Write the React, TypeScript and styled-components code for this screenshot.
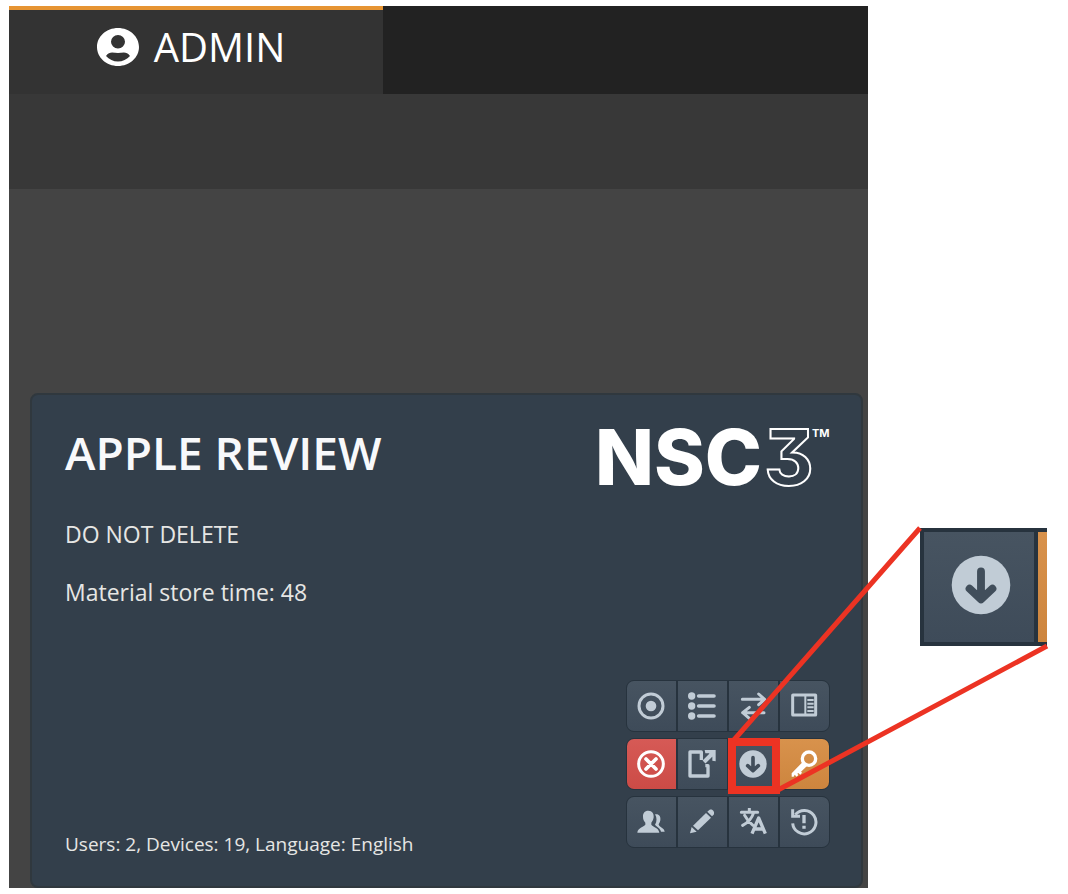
import React from "react";
import styled, { createGlobalStyle } from "styled-components";

const GlobalStyle = createGlobalStyle`
  *, *::before, *::after { box-sizing: border-box; }
  body {
    margin: 0;
    background: #ffffff;
    font-family: "Open Sans", "Noto Sans", sans-serif;
  }
`;

const light = "#c1ccd6";
const slate = "#414e5b";
const edge = "#27333e";
const marker = "#ec3323";

const Page = styled.div`
  display: flex;
  align-items: flex-start;
  padding: 6px 21px 6px 9px;
`;

const AppWindow = styled.main`
  flex: 1;
  min-width: 560px;
  background: #444444;
`;

const TopBar = styled.nav`
  display: flex;
  background: #222222;
`;

const Tab = styled.a`
  display: flex;
  align-items: center;
  justify-content: center;
  gap: 15px;
  width: 374px;
  height: 88px;
  padding-bottom: 10px;
  padding-right: 10px;
  border-top: 4px solid #e69432;
  background: #333333;
  color: #ffffff;
  font-size: 40px;
  line-height: 56px;
  text-decoration: none;
`;

const SubBar = styled.div`
  height: 95px;
  background: #383838;
`;

const Content = styled.div`
  padding: 204px 5px 0 21px;
`;

const Card = styled.article`
  display: flex;
  flex-direction: column;
  justify-content: space-between;
  min-height: 495px;
  padding: 26px 31px 28px 33px;
  border: 2px solid #30383e;
  border-radius: 8px;
  background: #333f4b;
  color: #e6e6e4;
`;

const CardHeader = styled.header`
  display: flex;
  justify-content: space-between;
  align-items: flex-start;
`;

const CardTitle = styled.h1`
  margin: 0;
  color: #f8f9fb;
  font-size: 46px;
  line-height: 62px;
  font-weight: 600;
`;

const CardText = styled.p`
  margin: 0 0 24px;
  font-size: 23px;
  line-height: 34px;
`;

const CardBody = styled.div`
  flex: 1;
  padding-top: 16px;
`;

const CardFooter = styled.footer`
  display: flex;
  justify-content: space-between;
  align-items: flex-end;
`;

const Meta = styled.p`
  margin: 0;
  font-size: 19px;
  line-height: 28px;
`;

const Actions = styled.div`
  display: grid;
  gap: 6px;
  margin-bottom: 10px;
`;

const ActionRow = styled.div`
  display: flex;
  gap: 2px;
  border: 1px solid ${edge};
  border-radius: 8px;
  background: ${edge};
  overflow: hidden;
`;

type Tone = "plain" | "danger" | "warn";

const tones: Record<Tone, string> = {
  plain: "linear-gradient(#475461, #3e4b59)",
  danger: "linear-gradient(#d65a56, #cc4b46)",
  warn: "linear-gradient(#d8924c, #cd853e)",
};

const ActionButton = styled.button<{ $tone: Tone }>`
  display: flex;
  align-items: center;
  justify-content: center;
  width: 49px;
  height: 50px;
  padding: 0 1px 0 0;
  border: 0;
  background: ${(p) => tones[p.$tone]};
  color: ${(p) => (p.$tone === "plain" ? light : "#ffffff")};
  cursor: pointer;
`;

const Callout = styled.aside`
  position: relative;
  display: flex;
  gap: 4px;
  width: 127px;
  height: 118px;
  margin: 522px 0 0 52px;
  padding: 4px 0 4px 4px;
  background: ${edge};
`;

const CalloutTile = styled.div`
  display: flex;
  align-items: center;
  justify-content: center;
  width: 110px;
  padding: 0 0 4px 4px;
  background: ${tones.plain};
  color: ${light};
`;

const CalloutNext = styled.div`
  flex: 1;
  background: ${tones.warn};
`;

const Pointer = styled.svg`
  position: absolute;
  right: 0;
  top: -4px;
  overflow: visible;
  pointer-events: none;
`;

const ink = {
  fill: "none",
  stroke: "currentColor",
  strokeWidth: 9,
} as const;

function Icon({ size = 28, children }: { size?: number; children: React.ReactNode }) {
  return (
    <svg width={size} height={size} viewBox="-42 -42 84 84" aria-hidden="true">
      {children}
    </svg>
  );
}

const RecordIcon = () => (
  <Icon>
    <circle r="36" {...ink} />
    <circle r="16" fill="currentColor" />
  </Icon>
);

const ListIcon = () => (
  <Icon>
    {[-30, 0, 30].map((y) => (
      <g key={y}>
        <circle cx="-31" cy={y} r="11" fill="currentColor" />
        <path d={`M-10 ${y}H36`} {...ink} strokeWidth={11} strokeLinecap="round" />
      </g>
    ))}
  </Icon>
);

const SwapIcon = () => (
  <Icon>
    <path d="M-32-20H33M17-36L35-20L17-4M33 20H-31M-11 4L-31 20L-11 37" {...ink} strokeLinecap="round" strokeLinejoin="round" />
  </Icon>
);

const PanelIcon = () => (
  <Icon>
    <rect x="-34" y="-33" width="69" height="60" rx="1" {...ink} />
    <path d="M4-33V27" {...ink} strokeWidth={6} />
    <path d="M10-18H29M10-7H29M10 4H29M10 15H29" {...ink} strokeWidth={6} />
  </Icon>
);

const RemoveIcon = () => (
  <Icon>
    <circle r="37" {...ink} />
    <path d="M-15-15L15 15M15-15L-15 15" {...ink} strokeWidth={11} strokeLinecap="round" />
  </Icon>
);

const ExportIcon = () => (
  <Icon>
    <path d="M-2-12V-36H-36V36H18V5H10" {...ink} strokeWidth={10} strokeLinejoin="round" />
    <path d="M6-6L30-30" {...ink} strokeWidth={12} />
    <path d="M8-42H41V-8L31-10V-22L21-32H10Z" fill="currentColor" />
  </Icon>
);

const DownloadIcon = ({ size }: { size?: number }) => (
  <Icon size={size}>
    <circle r="41" fill="currentColor" />
    <path d="M0-19V18M-16 5L0 20L16 5" {...ink} stroke={slate} strokeWidth={11} strokeLinecap="round" strokeLinejoin="round" />
  </Icon>
);

const KeyIcon = () => (
  <Icon>
    <circle cx="15" cy="-16" r="20" {...ink} strokeWidth={10} />
    <path d="M-3-7L9 6L-9 23L-6 26L-11 32L-17 27L-20 29L-17 33L-22 38L-28 32L-31 38H-37V28Z" fill="currentColor" />
  </Icon>
);

const UsersIcon = () => (
  <Icon>
    <path
      d="M-8-34C4-34 9-25 8-14C7-6 4-2 1 2V8C5 15 23 16 25 32H-41C-40 17-22 15-17 8V2C-21-2-24-7-24-15C-25-26-19-34-8-34Z"
      fill="currentColor"
    />
    <path
      d="M12-23C24-25 30-17 28-5C27 2 23 5 23 8C25 15 40 17 41 29H30C28 18 17 14 12 8C18-1 18-13 12-23Z"
      fill="currentColor"
    />
  </Icon>
);

const PencilIcon = () => (
  <Icon>
    <path d="M-36 34L-31 15L-16 29Z" fill="currentColor" />
    <path d="M-27 11L12-27L27-13L-12 25Z" fill="currentColor" />
    <path d="M16-31L22-36C30-41 40-31 35-22L30-17Z" fill="currentColor" />
  </Icon>
);

const TranslateIcon = () => (
  <Icon>
    <path d="M-11-40V-30M-35-29H14M2-28C-3-12-15 2-31 10M-25-20C-19-8-10 2 0 10" {...ink} strokeLinecap="round" />
    <path d="M-3 35L17-12L37 35M5 21H29" {...ink} strokeWidth={10} strokeLinejoin="round" />
  </Icon>
);

const RestoreIcon = () => (
  <Icon>
    <path d="M-26-22A35 35 0 1 1-34 4" {...ink} />
    <path d="M-34-38V-17H-12" {...ink} />
    <path d="M0-21V4M0 11V20" {...ink} strokeWidth={10} />
  </Icon>
);

type Action = { label: string; icon: React.ReactNode; tone?: Tone };

const actionRows: Action[][] = [
  [
    { label: "Record", icon: <RecordIcon /> },
    { label: "List", icon: <ListIcon /> },
    { label: "Transfer", icon: <SwapIcon /> },
    { label: "Panel", icon: <PanelIcon /> },
  ],
  [
    { label: "Remove", icon: <RemoveIcon />, tone: "danger" },
    { label: "Export", icon: <ExportIcon /> },
    { label: "Download", icon: <DownloadIcon /> },
    { label: "Access key", icon: <KeyIcon />, tone: "warn" },
  ],
  [
    { label: "Users", icon: <UsersIcon /> },
    { label: "Edit", icon: <PencilIcon /> },
    { label: "Translate", icon: <TranslateIcon /> },
    { label: "History", icon: <RestoreIcon /> },
  ],
];

const AccountIcon = () => (
  <svg width="42" height="40" viewBox="0 0 42 40" aria-hidden="true">
    <path
      fill="currentColor"
      fillRule="evenodd"
      d="M21 1C32.600 1 42 9.500 42 20S32.600 39 21 39S0 30.500 0 20S9.400 1 21 1ZM21 8A7 6.700 0 1 0 21 21.400A7 6.700 0 1 0 21 8ZM9 29C12 32.500 16.500 34.500 21 34.500S30 32.500 33 29C29.500 23.500 25 26 21 26S12.500 23.500 9 29Z"
    />
  </svg>
);

const LogoFrame = styled.svg`
  flex: none;
  overflow: visible;
`;

const LogoText = styled.text`
  font-family: Inter, "Open Sans", sans-serif;
  font-size: 77px;
  font-weight: 800;
  fill: #ffffff;
`;

const LogoDigit = styled(LogoText)`
  font-weight: 700;
  font-feature-settings: "cv09" 1;
  fill: none;
  stroke: #ffffff;
  stroke-width: 2px;
`;

const LogoMark = styled(LogoText)`
  font-size: 11px;
  font-weight: 700;
`;

const Logo = () => (
  <LogoFrame width="232" height="80" viewBox="0 0 232 80" role="img" aria-label="NSC3">
    <LogoText x="-3" y="64">NSC</LogoText>
    <LogoDigit x="166" y="64">3</LogoDigit>
    <LogoMark x="214" y="16">TM</LogoMark>
  </LogoFrame>
);

export default function App() {
  return (
    <>
      <GlobalStyle />
      <Page>
        <AppWindow>
          <TopBar>
            <Tab href="#admin">
              <AccountIcon />
              ADMIN
            </Tab>
          </TopBar>
          <SubBar />
          <Content>
            <Card>
              <CardHeader>
                <CardTitle>APPLE REVIEW</CardTitle>
                <Logo />
              </CardHeader>
              <CardBody>
                <CardText>DO NOT DELETE</CardText>
                <CardText>Material store time: 48</CardText>
              </CardBody>
              <CardFooter>
                <Meta>Users: 2, Devices: 19, Language: English</Meta>
                <Actions>
                  {actionRows.map((row, i) => (
                    <ActionRow key={i}>
                      {row.map((a) => (
                        <ActionButton key={a.label} type="button" aria-label={a.label} $tone={a.tone ?? "plain"}>
                          {a.icon}
                        </ActionButton>
                      ))}
                    </ActionRow>
                  ))}
                </Actions>
              </CardFooter>
            </Card>
          </Content>
        </AppWindow>
        <Callout>
          <CalloutTile>
            <DownloadIcon size={60} />
          </CalloutTile>
          <CalloutNext />
          <Pointer width="320" height="272" viewBox="0 0 320 272" fill="none" stroke={marker} aria-hidden="true">
            <rect x="5" y="218" width="44" height="48" strokeWidth="8" />
            <path d="M6 217L193 4M51 266L320 122" strokeWidth="5" />
          </Pointer>
        </Callout>
      </Page>
    </>
  );
}
